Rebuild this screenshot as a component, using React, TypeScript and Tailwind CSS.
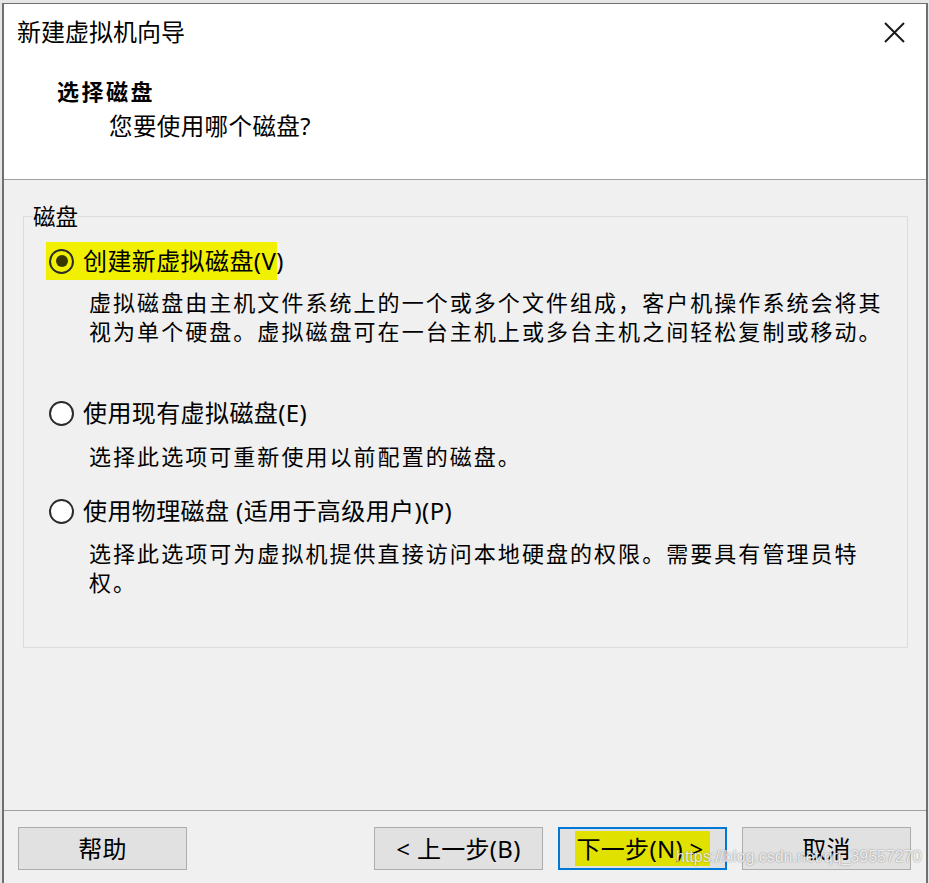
import React from "react";

function Radio({ checked }: { checked?: boolean }) {
  return (
    <span
      className={
        "flex h-[25px] w-[25px] shrink-0 items-center justify-center rounded-full border-[2.5px] border-[#2b2b2b] " +
        (checked ? "bg-transparent" : "bg-white")
      }
    >
      {checked && <span className="block h-[12px] w-[12px] rounded-full bg-[#363600]" />}
    </span>
  );
}

function Option({
  label,
  checked,
  highlight,
}: {
  label: string;
  checked?: boolean;
  highlight?: boolean;
}) {
  return (
    <div
      className={
        "flex h-[38px] w-[231px] items-center pl-[3px] " + (highlight ? "bg-[#f0f000]" : "")
      }
    >
      <Radio checked={checked} />
      <span className="ml-[9px] whitespace-nowrap text-[24px] leading-[30px] tracking-[0.4px] text-black">
        {label}
      </span>
    </div>
  );
}

function Btn({ children, primary }: { children: React.ReactNode; primary?: boolean }) {
  return (
    <div
      className={
        "flex h-[43px] w-[169px] items-center justify-center bg-[#e1e1e1] text-[24px] tracking-[0.3px] text-black " +
        (primary ? "border-2 border-[#0078d7]" : "border border-[#adadad]")
      }
    >
      {children}
    </div>
  );
}

export default function App() {
  return (
    <div className="relative h-[883px] w-[929px] overflow-hidden bg-[#e6e6e6] pl-[2px] pt-[3px] font-['Noto_Sans','Noto_Sans_CJK_SC',sans-serif]">
      <div className="flex h-[900px] w-[926px] flex-col border-x-2 border-t border-[#6f6f6f]">
        {/* Header */}
        <div className="flex h-[176px] shrink-0 flex-col border-b border-[#a0a0a0] bg-white">
          <div className="ml-[13px] mt-[12px] flex h-[32px] items-center justify-between pr-[21px]">
            <span className="text-[24px] leading-[32px] text-black">新建虚拟机向导</span>
            <svg width="21" height="21" viewBox="0 0 21 21" className="mt-[1px]">
              <path d="M1 1 L20 20 M20 1 L1 20" stroke="#1a1a1a" strokeWidth="2" fill="none" />
            </svg>
          </div>
          <div className="ml-[53px] mt-[28px] text-[22px] font-bold leading-[30px] tracking-[2.5px] text-black">
            选择磁盘
          </div>
          <div className="ml-[105px] mt-[5px] text-[23.5px] leading-[30px] tracking-[0.4px] text-black">
            您要使用哪个磁盘?
          </div>
        </div>

        {/* Body */}
        <div className="h-[630px] shrink-0 bg-[#f0f0f0] pt-[36px]">
          <div className="relative ml-[19px] h-[432px] w-[885px] border border-[#dcdcdc] pl-[22px] pt-[25px]">
            <span className="absolute left-[9px] top-[-12px] bg-[#f0f0f0] text-[22.5px] leading-[24px] text-black">
              磁盘
            </span>

            <Option label="创建新虚拟磁盘(V)" checked highlight />
            <div className="ml-[43px] mt-[8px] whitespace-nowrap text-[22px] leading-[29px] tracking-[2.05px] text-black">
              虚拟磁盘由主机文件系统上的一个或多个文件组成，客户机操作系统会将其
              <br />
              视为单个硬盘。虚拟磁盘可在一台主机上或多台主机之间轻松复制或移动。
            </div>

            <div className="mt-[48px]">
              <Option label="使用现有虚拟磁盘(E)" />
            </div>
            <div className="ml-[43px] mt-[10px] whitespace-nowrap text-[22px] leading-[29px] tracking-[2.05px] text-black">
              选择此选项可重新使用以前配置的磁盘。
            </div>

            <div className="mt-[21px]">
              <Option label="使用物理磁盘 (适用于高级用户)(P)" />
            </div>
            <div className="ml-[43px] mt-[9px] whitespace-nowrap text-[22px] leading-[29px] tracking-[2.05px] text-black">
              选择此选项可为虚拟机提供直接访问本地硬盘的权限。需要具有管理员特
              <br />
              权。
            </div>
          </div>
        </div>

        {/* Button bar */}
        <div className="flex flex-1 items-start border-t border-[#a0a0a0] bg-[#f0f0f0] pl-[14px] pr-[15px] pt-[16px]">
          <Btn>帮助</Btn>
          <div className="ml-auto flex gap-[15px]">
            <Btn>&lt; 上一步(B)</Btn>
            <Btn primary>
              <span className="h-[35px] bg-[#e1e100] pl-[1px] pr-[6px] leading-[35px]">下一步(N) &gt;</span>
            </Btn>
            <Btn>取消</Btn>
          </div>
        </div>
      </div>

      <span className="absolute left-[676px] top-[845px] whitespace-nowrap font-['Liberation_Sans',sans-serif] text-[16px] leading-[24px] text-white/85 [text-shadow:0_0_1.5px_rgba(0,0,0,0.55)]">
        https://blog.csdn.net/qq_39557270
      </span>
    </div>
  );
}
